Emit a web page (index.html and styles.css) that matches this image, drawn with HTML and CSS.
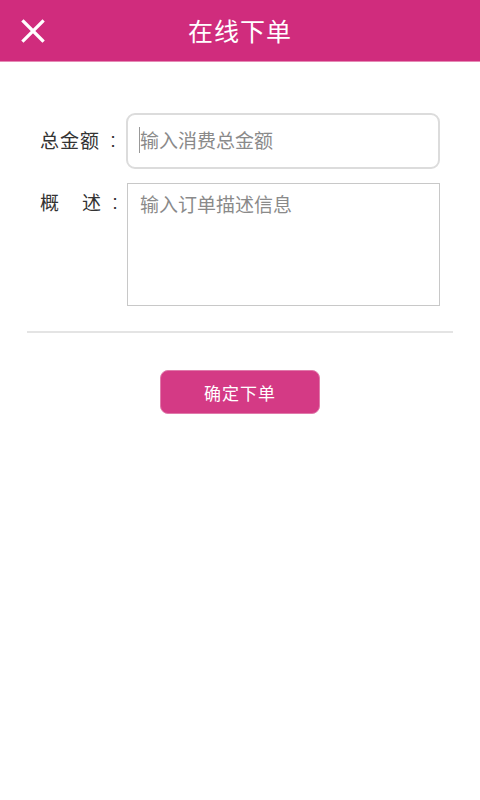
FILE: index.html
```html
<!DOCTYPE html>
<html lang="zh">
<head>
<meta charset="utf-8">
<link rel="stylesheet" href="styles.css">
</head>
<body>
<header class="topbar">
  <svg class="close" width="24" height="24" viewBox="0 0 24 24"><path d="M2.5 2.5 L21.5 21.5 M21.5 2.5 L2.5 21.5" stroke="#fff" stroke-width="3.2" stroke-linecap="square"/></svg>
  <h1 class="title">在线下单</h1>
</header>
<main class="form">
  <div class="row">
    <label class="label">总金额<span class="colon">:</span></label>
    <div class="input"><span class="caret"></span><span class="ph">输入消费总金额</span></div>
  </div>
  <div class="row row-top">
    <label class="label">概<span class="sp"></span>述<span class="colon">:</span></label>
    <div class="textarea"><span class="ph">输入订单描述信息</span></div>
  </div>
  <div class="divider"></div>
  <div class="actions"><button class="submit">确定下单</button></div>
</main>
</body>
</html>
```
FILE: styles.css
```css
* { box-sizing: border-box; }
body { margin: 0; background: #fff; font-family: "Noto Sans CJK SC", "Noto Sans", sans-serif; }
.topbar { height: 62px; background: #d02c7d; border-bottom: 1px solid #e58ab5; display: flex; align-items: center; justify-content: center; position: relative; }
.close { position: absolute; left: 21px; top: 19px; }
.title { margin: 0; color: #fff; font-size: 25px; font-weight: 400; letter-spacing: 1px; line-height: 1; }
.form { padding: 51px 27px 0 27px; }
.row { display: flex; align-items: center; }
.row-top { align-items: flex-start; margin-top: 14px; }
.label { width: 99px; padding-left: 13px; font-size: 19px; line-height: 24px; color: #333; white-space: nowrap; letter-spacing: 1px; display: flex; align-items: center; margin-top: -3px; }
.row-top .label { padding-top: 10px; }
.colon { display: inline-block; width: 20px; text-align: center; margin-left: 3px; font-family: "Liberation Sans", sans-serif; font-size: 20px; letter-spacing: 0; }
.sp { display: inline-block; width: 22px; }
.input { width: 314px; height: 56px; border: 2px solid #dcdcdc; border-radius: 9px; display: flex; align-items: center; padding-left: 11px; padding-bottom: 3px; }
.caret { width: 1px; height: 26px; background: #999; }
.ph { font-size: 19px; color: #8a8a8a; line-height: 24px; }
.textarea { margin-left: 1px; width: 313px; height: 123px; border: 1px solid #c8c8c8; padding: 8px 0 0 12px; }
.divider { height: 2px; background: #e4e4e4; margin-top: 25px; width: 426px; }
.actions { display: flex; justify-content: center; margin-top: 37px; }
.submit { width: 160px; height: 44px; background: #d43a85; border: 1px solid #e07aab; border-radius: 8px; color: #fff; font-family: inherit; font-size: 17px; letter-spacing: 1px; padding: 0; }
```
